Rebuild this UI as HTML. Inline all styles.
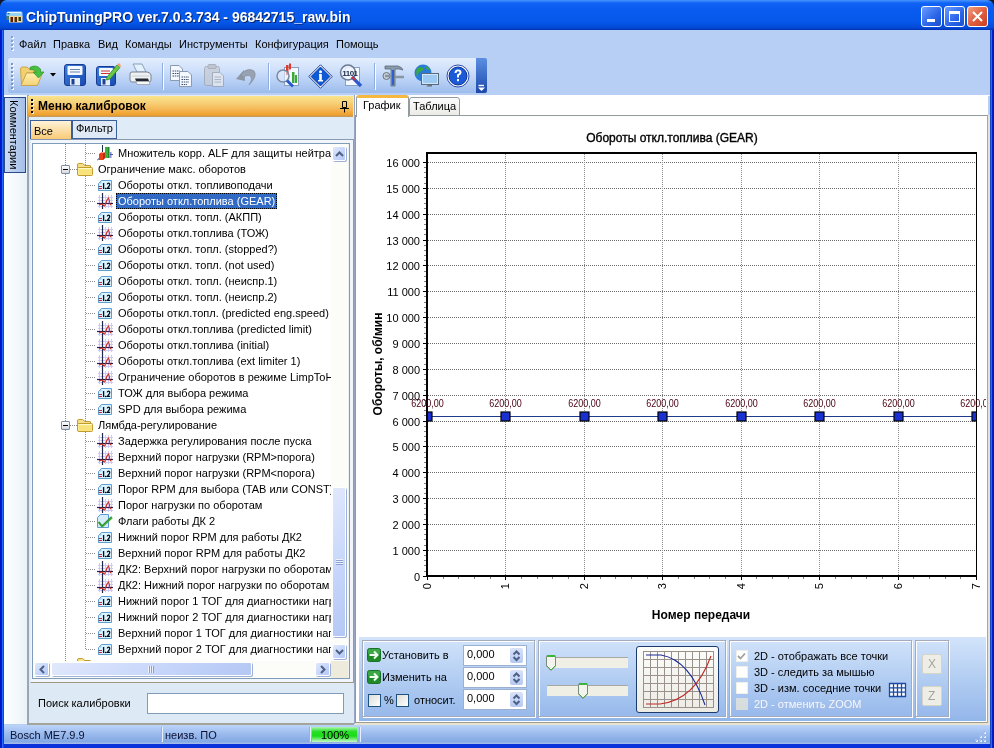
<!DOCTYPE html><html><head><meta charset="utf-8"><style>
*{margin:0;padding:0;box-sizing:border-box}
html,body{width:994px;height:748px;overflow:hidden;background:#0831d9;}
body{will-change:transform;font-family:"Liberation Sans", sans-serif;font-size:11px;color:#000}
.abs{position:absolute}
.ic{position:absolute}
.tt{position:absolute;white-space:nowrap;height:16px;line-height:16px;padding:0 2px;font-size:11px}
.sel{background:#316ac5;color:#fff;outline:1px dotted #000;outline-offset:-1px}
.vdot{position:absolute;width:1px;background-image:linear-gradient(#8c8c8c 50%,transparent 50%);background-size:1px 2px}
.hdot{position:absolute;height:1px;background-image:linear-gradient(90deg,#8c8c8c 50%,transparent 50%);background-size:2px 1px}
.minus{position:absolute;width:9px;height:9px;border:1px solid #7a8ea8;border-radius:1px;background:linear-gradient(#fff,#d4d8de)}
.minus:after{content:"";position:absolute;left:1px;top:3px;width:5px;height:1px;background:#000}
.mi{position:absolute;top:38px;font-size:11px;white-space:nowrap}
</style></head><body><div class="abs" style="left:0;top:0;width:6px;height:6px;background:#101830"></div><div class="abs" style="left:988px;top:0;width:6px;height:6px;background:#101830"></div><div class="abs" style="left:0;top:0;width:994px;height:30px;background:linear-gradient(#4a94ff 0px,#1064f4 3px,#0a5cf0 8px,#0658ea 22px,#0348d4 28px,#0030b0 30px);border-radius:7px 7px 0 0"></div><svg class="abs" style="left:6px;top:11px" width="17" height="12" viewBox="0 0 17 12"><path d="M0.5 2 Q0.5 0.5 2 0.5 H15 Q16.5 0.5 16.5 2 V5.5 H0.5 Z" fill="#9ad4f4"/><path d="M1 1.5 H15" stroke="#e8f8ff"/><rect x="1.5" y="2" width="2" height="1.5" fill="#3a6a8a"/><path d="M0.5 5 V9 H3 V5 Z" fill="#4a7a6a"/><rect x="3" y="5" width="13.5" height="6.5" fill="#f0d898"/><rect x="4.5" y="6" width="2.5" height="5" fill="#5a1a08"/><rect x="8.5" y="6" width="2.5" height="5" fill="#5a2a08"/><rect x="12.5" y="6" width="2.5" height="4" fill="#3a3a10"/></svg><div class="abs" style="left:26px;top:9px;font-weight:bold;font-size:14px;color:#fff;white-space:nowrap;text-shadow:1px 1px #0a246a">ChipTuningPRO ver.7.0.3.734 - 96842715_raw.bin</div><div class="abs" style="left:921px;top:6px;width:21px;height:21px;border:1px solid #fff;border-radius:3px;background:linear-gradient(135deg,#6a9cff,#2a64e8 60%,#1a50d0)"><div class="abs" style="left:5px;top:12px;width:8px;height:3px;background:#fff"></div></div><div class="abs" style="left:944px;top:6px;width:21px;height:21px;border:1px solid #fff;border-radius:3px;background:linear-gradient(135deg,#6a9cff,#2a64e8 60%,#1a50d0)"><div class="abs" style="left:4px;top:4px;width:11px;height:11px;border:1px solid #fff;border-top-width:3px"></div></div><div class="abs" style="left:967px;top:6px;width:21px;height:21px;border:1px solid #fff;border-radius:3px;background:linear-gradient(135deg,#f0a080,#e06040 50%,#c84020)"><svg class="abs" style="left:4px;top:4px" width="11" height="11"><path d="M1 1 L10 10 M10 1 L1 10" stroke="#fff" stroke-width="2"/></svg></div><div class="abs" style="left:4px;top:30px;width:986px;height:713px;background:#b8cff5"></div><div class="mi" style="left:19px">Файл</div><div class="mi" style="left:53px">Правка</div><div class="mi" style="left:98px">Вид</div><div class="mi" style="left:125px">Команды</div><div class="mi" style="left:179px">Инструменты</div><div class="mi" style="left:255px">Конфигурация</div><div class="mi" style="left:336px">Помощь</div><div class="abs" style="left:8px;top:58px;width:469px;height:35px;border-radius:3px 0 0 3px;background:linear-gradient(#e3eefd,#d2e2fb 30%,#b8d0f5 65%,#9cbcec)"></div><div class="abs" style="left:4px;top:95px;width:986px;height:1px;background:#f4f8fe"></div><div class="abs" style="left:476px;top:58px;width:11px;height:35px;border-radius:0 2px 2px 0;background:linear-gradient(#5c8ee0,#3a6cc8 50%,#1e48a8)"></div><svg class="abs" style="left:477px;top:84px" width="9" height="8"><path d="M1.5 1.5 H7" stroke="#fff" stroke-width="1.4"/><path d="M1 3.5 H8 L4.5 7 Z" fill="#fff"/></svg><div class="abs" style="left:11px;top:63px;width:2px;height:2px;background:#7c92c0"></div><div class="abs" style="left:12px;top:64px;width:2px;height:2px;background:#fff;z-index:0"></div><div class="abs" style="left:11px;top:63px;width:2px;height:2px;background:#7c92c0"></div><div class="abs" style="left:11px;top:67px;width:2px;height:2px;background:#7c92c0"></div><div class="abs" style="left:12px;top:68px;width:2px;height:2px;background:#fff;z-index:0"></div><div class="abs" style="left:11px;top:67px;width:2px;height:2px;background:#7c92c0"></div><div class="abs" style="left:11px;top:71px;width:2px;height:2px;background:#7c92c0"></div><div class="abs" style="left:12px;top:72px;width:2px;height:2px;background:#fff;z-index:0"></div><div class="abs" style="left:11px;top:71px;width:2px;height:2px;background:#7c92c0"></div><div class="abs" style="left:11px;top:75px;width:2px;height:2px;background:#7c92c0"></div><div class="abs" style="left:12px;top:76px;width:2px;height:2px;background:#fff;z-index:0"></div><div class="abs" style="left:11px;top:75px;width:2px;height:2px;background:#7c92c0"></div><div class="abs" style="left:11px;top:79px;width:2px;height:2px;background:#7c92c0"></div><div class="abs" style="left:12px;top:80px;width:2px;height:2px;background:#fff;z-index:0"></div><div class="abs" style="left:11px;top:79px;width:2px;height:2px;background:#7c92c0"></div><div class="abs" style="left:11px;top:83px;width:2px;height:2px;background:#7c92c0"></div><div class="abs" style="left:12px;top:84px;width:2px;height:2px;background:#fff;z-index:0"></div><div class="abs" style="left:11px;top:83px;width:2px;height:2px;background:#7c92c0"></div><div class="abs" style="left:11px;top:87px;width:2px;height:2px;background:#7c92c0"></div><div class="abs" style="left:12px;top:88px;width:2px;height:2px;background:#fff;z-index:0"></div><div class="abs" style="left:11px;top:87px;width:2px;height:2px;background:#7c92c0"></div><div class="abs" style="left:12px;top:37px;width:2px;height:2px;background:#fff"></div><div class="abs" style="left:11px;top:36px;width:2px;height:2px;background:#8aa0cc"></div><div class="abs" style="left:12px;top:41px;width:2px;height:2px;background:#fff"></div><div class="abs" style="left:11px;top:40px;width:2px;height:2px;background:#8aa0cc"></div><div class="abs" style="left:12px;top:45px;width:2px;height:2px;background:#fff"></div><div class="abs" style="left:11px;top:44px;width:2px;height:2px;background:#8aa0cc"></div><div class="abs" style="left:12px;top:49px;width:2px;height:2px;background:#fff"></div><div class="abs" style="left:11px;top:48px;width:2px;height:2px;background:#8aa0cc"></div><div class="abs" style="left:162px;top:63px;width:1px;height:26px;background:#8eaee0"></div><div class="abs" style="left:163px;top:64px;width:1px;height:26px;background:#fff"></div><div class="abs" style="left:268px;top:63px;width:1px;height:26px;background:#8eaee0"></div><div class="abs" style="left:269px;top:64px;width:1px;height:26px;background:#fff"></div><div class="abs" style="left:374px;top:63px;width:1px;height:26px;background:#8eaee0"></div><div class="abs" style="left:375px;top:64px;width:1px;height:26px;background:#fff"></div><svg class="abs" style="left:19px;top:63px" width="27" height="25" viewBox="0 0 27 25">
<defs><linearGradient id="fy" x1="0" y1="0" x2="0" y2="1"><stop offset="0" stop-color="#fff0b0"/><stop offset="1" stop-color="#f2d27a"/></linearGradient></defs>
<path d="M1.5 6 Q1.5 4 3.5 4 H8 L10 6 H16 V10 H8 L2.5 22 Z" fill="#f0d070" stroke="#c8a040" stroke-width="0.9"/>
<path d="M2 22.5 L7.5 10 H23.5 L18.5 22.5 Z" fill="url(#fy)" stroke="#c8a040" stroke-width="0.9"/>
<path d="M11 4.5 Q17 1 21.5 6 L21.5 9 L25 9 L19.5 15 L14 9 L17.5 9 Q15.5 6 11 6.5 Z" fill="#48c040" stroke="#2a9028" stroke-width="0.7"/>
</svg><svg class="abs" style="left:50px;top:73px" width="7" height="4"><path d="M0 0 H6 L3 3.5 Z" fill="#000"/></svg><svg class="abs" style="left:64px;top:64px" width="23" height="23" viewBox="0 0 23 23">
<defs><linearGradient id="sb" x1="0" y1="0" x2="1" y2="1"><stop offset="0" stop-color="#3a80e0"/><stop offset="1" stop-color="#1a4ab0"/></linearGradient></defs>
<rect x="0.5" y="0.5" width="21" height="21" rx="2.5" fill="url(#sb)" stroke="#1a3c90"/>
<rect x="3.5" y="2" width="15" height="9" rx="1" fill="#f4f8ff"/>
<path d="M6 5.5 H16 M6 8 H16" stroke="#6a86b0"/>
<rect x="6" y="14" width="10" height="7.5" fill="#e4ecf8"/><rect x="7.5" y="15" width="3" height="5.5" fill="#1f3f90"/>
</svg><svg class="abs" style="left:96px;top:62px" width="25" height="25" viewBox="0 0 25 25">
<rect x="0.5" y="4.5" width="19" height="19" rx="2.5" fill="url(#sb)" stroke="#1a3c90"/>
<rect x="3" y="6" width="14" height="8" rx="1" fill="#f4f8ff"/>
<path d="M5 9 H14 M5 11.5 H14" stroke="#d03030"/>
<rect x="5" y="16" width="9" height="7.5" fill="#e4ecf8"/><rect x="6.5" y="17" width="3" height="5.5" fill="#1f3f90"/>
<path d="M11 15 L21 3 L24 5.5 L14 17 L10.5 18 Z" fill="#6cc848" stroke="#2f8a20" stroke-width="0.8"/>
<path d="M21 3 L23 1 L25 3.5 L24 5.5" fill="#f0a070"/>
</svg><svg class="abs" style="left:128px;top:63px" width="25" height="24" viewBox="0 0 25 24">
<path d="M5 1 H14 L18 9 H9 Z" fill="#e4f2ff" stroke="#8aa0b8"/>
<path d="M2 11 Q2 9 4 9 H19 Q22 9 23 12 V17 Q23 19 21 19 H4 Q2 19 2 17 Z" fill="#eef0f2" stroke="#7a8490"/>
<path d="M4 13 H21" stroke="#c8d0d8"/>
<path d="M7 15.5 H20 L21 18 H8 Z" fill="#202830"/>
<path d="M8 18.5 H21 L22 21.5 H9 Z" fill="#f8f8f8" stroke="#9aa0a8" stroke-width="0.8"/>
</svg><svg class="abs" style="left:170px;top:65px" width="23" height="22" viewBox="0 0 23 22">
<path d="M0.5 0.5 H9 L12.5 4 V15.5 H0.5 Z" fill="#f4f8ff" stroke="#8a9ab0"/>
<path d="M2.5 6 H10 M2.5 8.5 H10 M2.5 11 H10" stroke="#3a4a6a" stroke-dasharray="1.5 0.8"/>
<path d="M9.5 6.5 H18 L21.5 10 V21.5 H9.5 Z" fill="#f4f8ff" stroke="#8a9ab0"/>
<path d="M11.5 12 H19 M11.5 14.5 H19 M11.5 17 H19 M11.5 19.5 H17" stroke="#3a4a6a" stroke-dasharray="1.5 0.8"/>
</svg><svg class="abs" style="left:204px;top:64px" width="21" height="23" viewBox="0 0 21 23" opacity="0.75">
<rect x="0.5" y="2.5" width="15" height="19" rx="2" fill="#c8ccd4" stroke="#9aa0aa"/>
<rect x="4" y="0.5" width="8" height="4" rx="1" fill="#b8bcc4" stroke="#9aa0aa"/>
<path d="M8.5 8.5 H16 L19.5 12 V22.5 H8.5 Z" fill="#e8eaee" stroke="#9aa0aa"/>
<path d="M10.5 13 H17 M10.5 15.5 H17 M10.5 18 H17" stroke="#a8acb4"/>
</svg><svg class="abs" style="left:235px;top:65px" width="22" height="21" viewBox="0 0 22 21">
<path d="M1 14 L9 5 L10 16 Z" fill="#8c96a4"/>
<path d="M6 9 Q13 2 19 6 Q23 11 14 20 Q19 12 14 10.5 Q10 10 8 13 Z" fill="#98a2b0" stroke="#7e8896" stroke-width="0.6"/>
</svg><svg class="abs" style="left:275px;top:63px" width="25" height="25" viewBox="0 0 25 25">
<rect x="9.5" y="4.5" width="14" height="18" fill="#f4f8ff" stroke="#8aa0c0"/>
<rect x="17" y="9" width="2.5" height="11" fill="#3aaa34"/><rect x="20" y="12" width="2" height="8" fill="#3aaa34"/>
<rect x="11" y="2" width="2.5" height="10" fill="#e03a2a"/><rect x="14" y="0.5" width="2" height="6" fill="#e03a2a"/>
<circle cx="8" cy="13" r="6" fill="rgba(230,240,255,0.6)" stroke="#7a8aa0" stroke-width="1.5"/>
<path d="M12 17.5 L18 23.5" stroke="#2a5ad0" stroke-width="3"/>
</svg><svg class="abs" style="left:308px;top:64px" width="25" height="25" viewBox="0 0 25 25">
<path d="M12.5 0.8 L24.2 12.5 L12.5 24.2 L0.8 12.5 Z" fill="#fff" stroke="#0a3aa0" stroke-width="1"/>
<path d="M12.5 3 L22 12.5 L12.5 22 L3 12.5 Z" fill="#0c5ad8" stroke="#0a2a80" stroke-width="0.8"/>
<circle cx="12.5" cy="7.8" r="1.5" fill="#fff"/><path d="M11 10 H13.8 V16 H15 V17.5 H10 V16 H11.2 V11.5 H11 Z" fill="#fff"/>
</svg><svg class="abs" style="left:339px;top:64px" width="26" height="24" viewBox="0 0 26 24">
<rect x="6.5" y="3.5" width="14" height="18" fill="#f4f8ff" stroke="#8aa0c0"/>
<circle cx="9" cy="8.5" r="7.5" fill="rgba(240,245,255,.85)" stroke="#6a7a90" stroke-width="1.5"/>
<text x="3.2" y="12" font-family="Liberation Sans" font-size="8" font-weight="bold" fill="#203050" letter-spacing="-0.5">1101</text>
<path d="M13 13 L22 22" stroke="#2a5ad0" stroke-width="3.2"/>
<path d="M13 13 L16 16" stroke="#d03030" stroke-width="2"/>
</svg><svg class="abs" style="left:382px;top:64px" width="24" height="24" viewBox="0 0 24 24">
<path d="M3 2 H16 Q20 3 21 6 L17 5 H13 V22 H9 V5 H3 Z" fill="#8a9aaa" stroke="#5a6a7a" stroke-width="0.8"/>
<path d="M10 6 H12 V21 H10 Z" fill="#2a60d0"/>
<circle cx="4.5" cy="12" r="3.5" fill="#c8d0d8" stroke="#6a7480"/>
<path d="M3 12 H9 M13 13 H22" stroke="#8a96a2" stroke-width="2.5"/>
</svg><svg class="abs" style="left:414px;top:64px" width="26" height="24" viewBox="0 0 26 24">
<circle cx="9" cy="9" r="8.5" fill="#2a7ad8"/>
<path d="M3 4 Q8 2 10 5 Q8 8 5 8 Q3 11 4 14 Q1 10 3 4 Z M11 2 Q15 3 16 6 Q12 6 11 2 Z" fill="#3aa83a"/>
<rect x="7.5" y="9.5" width="17" height="11" fill="#cfe6fb" stroke="#5a6a7a"/>
<rect x="9" y="11" width="14" height="8" fill="#9ccaf2"/>
<path d="M14 21 H18 V22.5 H12 Z" fill="#6a7480"/>
</svg><svg class="abs" style="left:446px;top:64px" width="24" height="24" viewBox="0 0 24 24">
<circle cx="12" cy="12" r="11" fill="#fff" stroke="#2a4ab0"/>
<circle cx="12" cy="12" r="9" fill="#1a5ad8" stroke="#0a3090"/>
<path d="M8.5 9 Q8.5 5.5 12 5.5 Q15.5 5.5 15.5 8.5 Q15.5 10.5 13 11.5 V13.5 H11 V10.5 Q13.5 9.5 13.5 8.5 Q13.5 7.3 12 7.3 Q10.5 7.3 10.5 9 Z" fill="#fff"/>
<rect x="11" y="15" width="2" height="2.2" fill="#fff"/>
</svg><div class="abs" style="left:4px;top:95px;width:23px;height:629px;background:linear-gradient(90deg,#ffffff,#eaf3f8)"></div><div class="abs" style="left:0;top:30px;width:4px;height:718px;background:linear-gradient(90deg,#0014c0 0,#0020d0 2px,#2468ff 2px,#2468ff 3px,#1848c0 3px)"></div><div class="abs" style="left:990px;top:30px;width:4px;height:718px;background:linear-gradient(90deg,#1848c0 0,#1848c0 1px,#2468ff 1px,#2468ff 2px,#0020d0 2px,#0014c0)"></div><div class="abs" style="left:4px;top:97px;width:22px;height:76px;border:1px solid #2a4a88;background:linear-gradient(90deg,#cddcf4,#a4bfe8)"></div><div class="abs" style="left:20px;top:100px;transform-origin:0 0;transform:rotate(90deg);white-space:nowrap;font-size:11px">Комментарии</div><div class="abs" style="left:27px;top:95px;width:328px;height:630px;background:#dfebf6;border-left:2px solid #9aa6b6"></div><div class="abs" style="left:28px;top:96px;width:325px;height:21px;background:linear-gradient(#f9e48c,#f7d27a 30%,#f4b654 65%,#f0a02a 90%,#c89a58 96%)"></div><div class="abs" style="left:31px;top:99px;width:2px;height:2px;background:#000;box-shadow:1px 1px 0 #fff8e0"></div><div class="abs" style="left:31px;top:103px;width:2px;height:2px;background:#000;box-shadow:1px 1px 0 #fff8e0"></div><div class="abs" style="left:31px;top:107px;width:2px;height:2px;background:#000;box-shadow:1px 1px 0 #fff8e0"></div><div class="abs" style="left:31px;top:111px;width:2px;height:2px;background:#000;box-shadow:1px 1px 0 #fff8e0"></div><div class="abs" style="left:38px;top:99px;font-weight:bold;font-size:12px;white-space:nowrap">Меню калибровок</div><svg class="abs" style="left:339px;top:100px" width="11" height="13"><path d="M3.5 1.5 H7.5 V7.5 H3.5 Z M1 8.5 H10 M5.5 8.5 V12.5" stroke="#000" fill="none"/></svg><div class="abs" style="left:30px;top:120px;width:42px;height:20px;border:1px solid #3b5f9a;border-bottom:none;background:linear-gradient(#fff3d8,#f8c872)"></div><div class="abs" style="left:34px;top:125px;font-size:11px">Все</div><div class="abs" style="left:72px;top:120px;width:45px;height:19px;border:1px solid #3b5f9a;background:#dfeaf6"></div><div class="abs" style="left:76px;top:122px;font-size:11px">Фильтр</div><div class="abs" style="left:30px;top:139px;width:324px;height:544px;border:1px solid #8a9ab0;background:#f0f6fc;border-bottom-color:#a09880;border-left-color:#e4ecf4"></div><div class="abs" style="left:32px;top:143px;width:318px;height:536px;border:1px solid #7f9db9;background:#fff"></div><div class="abs" style="left:348px;top:144px;width:1px;height:534px;background:#f0f0ee"></div><div class="abs" style="left:354px;top:95px;width:1px;height:629px;background:#9aa4c4"></div><div class="abs" style="left:33px;top:144px;width:298px;height:517px;overflow:hidden"><div class="vdot" style="left:32px;top:0;height:517px"></div><div class="vdot" style="left:52px;top:0;height:26px"></div><div class="vdot" style="left:52px;top:32px;height:249px"></div><div class="vdot" style="left:52px;top:288px;height:218px"></div><div class="hdot" style="left:53px;top:9px;width:10px"></div><svg class="ic" style="left:64px;top:1px" width="17" height="16" viewBox="0 0 17 16">
<path d="M5.5 0 V7" stroke="#1d2d55"/>
<path d="M0 15.5 L2.5 13" stroke="#1d2d55"/>
<path d="M2 9 L4 7.5 H8 V13 L6 15 H2 Z" fill="#e8401c"/>
<path d="M8 7.5 V13 L6 15 V9 Z" fill="#b82c10"/>
<rect x="8" y="2" width="4" height="11" fill="#3cb43c"/><rect x="11" y="2" width="1.5" height="11" fill="#1e8a2a"/>
<rect x="12.5" y="7" width="2" height="6" fill="#8c8ce0"/>
<path d="M13 9.5 H16" stroke="#4a5aa8"/>
</svg><div class="tt" style="left:83px;top:1px">Множитель корр. ALF для защиты нейтра</div><div class="hdot" style="left:37px;top:25px;width:7px"></div><div class="minus" style="left:28px;top:21px"></div><svg class="ic" style="left:44px;top:19px" width="16" height="13" viewBox="0 0 16 13">
<path d="M0.5 11.5 V2 Q0.5 0.5 2 0.5 H5.5 Q6.5 0.5 7 2 L7.5 2.5 H13 Q13.5 2.5 13.5 3 V4.5" fill="#f6e08a" stroke="#bf9c2c"/>
<path d="M1.5 4.5 H14.5 Q15.5 4.5 15.5 5.5 V11.5 Q15.5 12.5 14.5 12.5 H2 Q0.5 12.5 0.5 11.5 V5.5 Q0.5 4.5 1.5 4.5 Z" fill="#fbe98e" stroke="#bf9c2c"/>
<path d="M2 5.5 H14.5" stroke="#fff8c8"/>
<rect x="2" y="6.5" width="12.5" height="5" fill="#f8e27a"/>
</svg><div class="tt" style="left:63px;top:17px">Ограничение макс. оборотов</div><div class="hdot" style="left:53px;top:41px;width:10px"></div><svg class="ic" style="left:65px;top:36px" width="14" height="11" viewBox="0 0 14 11">
<path d="M3.5 0.5 H13.5 V10.5 H0.5 V3.5 Z" fill="#dcf4fe" stroke="#5aa0d8"/>
<path d="M1 3.5 L3.5 1 V3.5 Z" fill="#9cc8ee"/>
<path d="M0.8 6.5 H4 M0.8 8.5 H4" stroke="#c8283a" stroke-width="1.1"/>
<path d="M5.6 3 V9" stroke="#050a20" stroke-width="1.3"/>
<rect x="6.9" y="7.8" width="1.3" height="1.3" fill="#050a20"/>
<path d="M9.2 4.4 Q9.5 3.2 10.6 3.2 Q11.8 3.2 11.8 4.5 Q11.8 5.5 9.3 8.4 H12.1" stroke="#050a20" stroke-width="1.25" fill="none"/>
</svg><div class="tt" style="left:83px;top:33px">Обороты откл. топливоподачи</div><div class="hdot" style="left:53px;top:57px;width:10px"></div><svg class="ic" style="left:64px;top:49px" width="16" height="16" viewBox="0 0 16 16">
<g stroke="#cfc8f4" stroke-width="1">
<path d="M1 4.5 H16 M1 7.5 H16 M1 13.5 H16 M2.5 2 V15 M8.5 2 V15 M11.5 2 V15 M14.5 2 V15"/></g>
<path d="M0 10.5 H16" stroke="#2a1a5a" stroke-width="1.2"/>
<path d="M5.5 0 V16" stroke="#1d2a50" stroke-width="1.2"/>
<path d="M2 12 Q4 11 5.5 11 Q6.5 13 7.5 13 Q9 11 10 7 L11.5 5 Q12.5 7 13 11 L14 12" fill="none" stroke="#c8301e" stroke-width="1.1"/>
</svg><div class="tt sel" style="left:83px;top:49px">Обороты откл.топлива (GEAR)</div><div class="hdot" style="left:53px;top:73px;width:10px"></div><svg class="ic" style="left:65px;top:68px" width="14" height="11" viewBox="0 0 14 11">
<path d="M3.5 0.5 H13.5 V10.5 H0.5 V3.5 Z" fill="#dcf4fe" stroke="#5aa0d8"/>
<path d="M1 3.5 L3.5 1 V3.5 Z" fill="#9cc8ee"/>
<path d="M0.8 6.5 H4 M0.8 8.5 H4" stroke="#c8283a" stroke-width="1.1"/>
<path d="M5.6 3 V9" stroke="#050a20" stroke-width="1.3"/>
<rect x="6.9" y="7.8" width="1.3" height="1.3" fill="#050a20"/>
<path d="M9.2 4.4 Q9.5 3.2 10.6 3.2 Q11.8 3.2 11.8 4.5 Q11.8 5.5 9.3 8.4 H12.1" stroke="#050a20" stroke-width="1.25" fill="none"/>
</svg><div class="tt" style="left:83px;top:65px">Обороты откл. топл. (АКПП)</div><div class="hdot" style="left:53px;top:89px;width:10px"></div><svg class="ic" style="left:64px;top:81px" width="16" height="16" viewBox="0 0 16 16">
<g stroke="#cfc8f4" stroke-width="1">
<path d="M1 4.5 H16 M1 7.5 H16 M1 13.5 H16 M2.5 2 V15 M8.5 2 V15 M11.5 2 V15 M14.5 2 V15"/></g>
<path d="M0 10.5 H16" stroke="#2a1a5a" stroke-width="1.2"/>
<path d="M5.5 0 V16" stroke="#1d2a50" stroke-width="1.2"/>
<path d="M2 12 Q4 11 5.5 11 Q6.5 13 7.5 13 Q9 11 10 7 L11.5 5 Q12.5 7 13 11 L14 12" fill="none" stroke="#c8301e" stroke-width="1.1"/>
</svg><div class="tt" style="left:83px;top:81px">Обороты откл.топлива (ТОЖ)</div><div class="hdot" style="left:53px;top:105px;width:10px"></div><svg class="ic" style="left:65px;top:100px" width="14" height="11" viewBox="0 0 14 11">
<path d="M3.5 0.5 H13.5 V10.5 H0.5 V3.5 Z" fill="#dcf4fe" stroke="#5aa0d8"/>
<path d="M1 3.5 L3.5 1 V3.5 Z" fill="#9cc8ee"/>
<path d="M0.8 6.5 H4 M0.8 8.5 H4" stroke="#c8283a" stroke-width="1.1"/>
<path d="M5.6 3 V9" stroke="#050a20" stroke-width="1.3"/>
<rect x="6.9" y="7.8" width="1.3" height="1.3" fill="#050a20"/>
<path d="M9.2 4.4 Q9.5 3.2 10.6 3.2 Q11.8 3.2 11.8 4.5 Q11.8 5.5 9.3 8.4 H12.1" stroke="#050a20" stroke-width="1.25" fill="none"/>
</svg><div class="tt" style="left:83px;top:97px">Обороты откл. топл. (stopped?)</div><div class="hdot" style="left:53px;top:121px;width:10px"></div><svg class="ic" style="left:65px;top:116px" width="14" height="11" viewBox="0 0 14 11">
<path d="M3.5 0.5 H13.5 V10.5 H0.5 V3.5 Z" fill="#dcf4fe" stroke="#5aa0d8"/>
<path d="M1 3.5 L3.5 1 V3.5 Z" fill="#9cc8ee"/>
<path d="M0.8 6.5 H4 M0.8 8.5 H4" stroke="#c8283a" stroke-width="1.1"/>
<path d="M5.6 3 V9" stroke="#050a20" stroke-width="1.3"/>
<rect x="6.9" y="7.8" width="1.3" height="1.3" fill="#050a20"/>
<path d="M9.2 4.4 Q9.5 3.2 10.6 3.2 Q11.8 3.2 11.8 4.5 Q11.8 5.5 9.3 8.4 H12.1" stroke="#050a20" stroke-width="1.25" fill="none"/>
</svg><div class="tt" style="left:83px;top:113px">Обороты откл. топл. (not used)</div><div class="hdot" style="left:53px;top:137px;width:10px"></div><svg class="ic" style="left:65px;top:132px" width="14" height="11" viewBox="0 0 14 11">
<path d="M3.5 0.5 H13.5 V10.5 H0.5 V3.5 Z" fill="#dcf4fe" stroke="#5aa0d8"/>
<path d="M1 3.5 L3.5 1 V3.5 Z" fill="#9cc8ee"/>
<path d="M0.8 6.5 H4 M0.8 8.5 H4" stroke="#c8283a" stroke-width="1.1"/>
<path d="M5.6 3 V9" stroke="#050a20" stroke-width="1.3"/>
<rect x="6.9" y="7.8" width="1.3" height="1.3" fill="#050a20"/>
<path d="M9.2 4.4 Q9.5 3.2 10.6 3.2 Q11.8 3.2 11.8 4.5 Q11.8 5.5 9.3 8.4 H12.1" stroke="#050a20" stroke-width="1.25" fill="none"/>
</svg><div class="tt" style="left:83px;top:129px">Обороты откл. топл. (неиспр.1)</div><div class="hdot" style="left:53px;top:153px;width:10px"></div><svg class="ic" style="left:65px;top:148px" width="14" height="11" viewBox="0 0 14 11">
<path d="M3.5 0.5 H13.5 V10.5 H0.5 V3.5 Z" fill="#dcf4fe" stroke="#5aa0d8"/>
<path d="M1 3.5 L3.5 1 V3.5 Z" fill="#9cc8ee"/>
<path d="M0.8 6.5 H4 M0.8 8.5 H4" stroke="#c8283a" stroke-width="1.1"/>
<path d="M5.6 3 V9" stroke="#050a20" stroke-width="1.3"/>
<rect x="6.9" y="7.8" width="1.3" height="1.3" fill="#050a20"/>
<path d="M9.2 4.4 Q9.5 3.2 10.6 3.2 Q11.8 3.2 11.8 4.5 Q11.8 5.5 9.3 8.4 H12.1" stroke="#050a20" stroke-width="1.25" fill="none"/>
</svg><div class="tt" style="left:83px;top:145px">Обороты откл. топл. (неиспр.2)</div><div class="hdot" style="left:53px;top:169px;width:10px"></div><svg class="ic" style="left:65px;top:164px" width="14" height="11" viewBox="0 0 14 11">
<path d="M3.5 0.5 H13.5 V10.5 H0.5 V3.5 Z" fill="#dcf4fe" stroke="#5aa0d8"/>
<path d="M1 3.5 L3.5 1 V3.5 Z" fill="#9cc8ee"/>
<path d="M0.8 6.5 H4 M0.8 8.5 H4" stroke="#c8283a" stroke-width="1.1"/>
<path d="M5.6 3 V9" stroke="#050a20" stroke-width="1.3"/>
<rect x="6.9" y="7.8" width="1.3" height="1.3" fill="#050a20"/>
<path d="M9.2 4.4 Q9.5 3.2 10.6 3.2 Q11.8 3.2 11.8 4.5 Q11.8 5.5 9.3 8.4 H12.1" stroke="#050a20" stroke-width="1.25" fill="none"/>
</svg><div class="tt" style="left:83px;top:161px">Обороты откл.топл. (predicted eng.speed)</div><div class="hdot" style="left:53px;top:185px;width:10px"></div><svg class="ic" style="left:64px;top:177px" width="16" height="16" viewBox="0 0 16 16">
<g stroke="#cfc8f4" stroke-width="1">
<path d="M1 4.5 H16 M1 7.5 H16 M1 13.5 H16 M2.5 2 V15 M8.5 2 V15 M11.5 2 V15 M14.5 2 V15"/></g>
<path d="M0 10.5 H16" stroke="#2a1a5a" stroke-width="1.2"/>
<path d="M5.5 0 V16" stroke="#1d2a50" stroke-width="1.2"/>
<path d="M2 12 Q4 11 5.5 11 Q6.5 13 7.5 13 Q9 11 10 7 L11.5 5 Q12.5 7 13 11 L14 12" fill="none" stroke="#c8301e" stroke-width="1.1"/>
</svg><div class="tt" style="left:83px;top:177px">Обороты откл.топлива (predicted limit)</div><div class="hdot" style="left:53px;top:201px;width:10px"></div><svg class="ic" style="left:64px;top:193px" width="16" height="16" viewBox="0 0 16 16">
<g stroke="#cfc8f4" stroke-width="1">
<path d="M1 4.5 H16 M1 7.5 H16 M1 13.5 H16 M2.5 2 V15 M8.5 2 V15 M11.5 2 V15 M14.5 2 V15"/></g>
<path d="M0 10.5 H16" stroke="#2a1a5a" stroke-width="1.2"/>
<path d="M5.5 0 V16" stroke="#1d2a50" stroke-width="1.2"/>
<path d="M2 12 Q4 11 5.5 11 Q6.5 13 7.5 13 Q9 11 10 7 L11.5 5 Q12.5 7 13 11 L14 12" fill="none" stroke="#c8301e" stroke-width="1.1"/>
</svg><div class="tt" style="left:83px;top:193px">Обороты откл.топлива (initial)</div><div class="hdot" style="left:53px;top:217px;width:10px"></div><svg class="ic" style="left:64px;top:209px" width="16" height="16" viewBox="0 0 16 16">
<g stroke="#cfc8f4" stroke-width="1">
<path d="M1 4.5 H16 M1 7.5 H16 M1 13.5 H16 M2.5 2 V15 M8.5 2 V15 M11.5 2 V15 M14.5 2 V15"/></g>
<path d="M0 10.5 H16" stroke="#2a1a5a" stroke-width="1.2"/>
<path d="M5.5 0 V16" stroke="#1d2a50" stroke-width="1.2"/>
<path d="M2 12 Q4 11 5.5 11 Q6.5 13 7.5 13 Q9 11 10 7 L11.5 5 Q12.5 7 13 11 L14 12" fill="none" stroke="#c8301e" stroke-width="1.1"/>
</svg><div class="tt" style="left:83px;top:209px">Обороты откл.топлива (ext limiter 1)</div><div class="hdot" style="left:53px;top:233px;width:10px"></div><svg class="ic" style="left:64px;top:225px" width="16" height="16" viewBox="0 0 16 16">
<g stroke="#cfc8f4" stroke-width="1">
<path d="M1 4.5 H16 M1 7.5 H16 M1 13.5 H16 M2.5 2 V15 M8.5 2 V15 M11.5 2 V15 M14.5 2 V15"/></g>
<path d="M0 10.5 H16" stroke="#2a1a5a" stroke-width="1.2"/>
<path d="M5.5 0 V16" stroke="#1d2a50" stroke-width="1.2"/>
<path d="M2 12 Q4 11 5.5 11 Q6.5 13 7.5 13 Q9 11 10 7 L11.5 5 Q12.5 7 13 11 L14 12" fill="none" stroke="#c8301e" stroke-width="1.1"/>
</svg><div class="tt" style="left:83px;top:225px">Ограничение оборотов в режиме LimpToH</div><div class="hdot" style="left:53px;top:249px;width:10px"></div><svg class="ic" style="left:65px;top:244px" width="14" height="11" viewBox="0 0 14 11">
<path d="M3.5 0.5 H13.5 V10.5 H0.5 V3.5 Z" fill="#dcf4fe" stroke="#5aa0d8"/>
<path d="M1 3.5 L3.5 1 V3.5 Z" fill="#9cc8ee"/>
<path d="M0.8 6.5 H4 M0.8 8.5 H4" stroke="#c8283a" stroke-width="1.1"/>
<path d="M5.6 3 V9" stroke="#050a20" stroke-width="1.3"/>
<rect x="6.9" y="7.8" width="1.3" height="1.3" fill="#050a20"/>
<path d="M9.2 4.4 Q9.5 3.2 10.6 3.2 Q11.8 3.2 11.8 4.5 Q11.8 5.5 9.3 8.4 H12.1" stroke="#050a20" stroke-width="1.25" fill="none"/>
</svg><div class="tt" style="left:83px;top:241px">ТОЖ для выбора режима</div><div class="hdot" style="left:53px;top:265px;width:10px"></div><svg class="ic" style="left:65px;top:260px" width="14" height="11" viewBox="0 0 14 11">
<path d="M3.5 0.5 H13.5 V10.5 H0.5 V3.5 Z" fill="#dcf4fe" stroke="#5aa0d8"/>
<path d="M1 3.5 L3.5 1 V3.5 Z" fill="#9cc8ee"/>
<path d="M0.8 6.5 H4 M0.8 8.5 H4" stroke="#c8283a" stroke-width="1.1"/>
<path d="M5.6 3 V9" stroke="#050a20" stroke-width="1.3"/>
<rect x="6.9" y="7.8" width="1.3" height="1.3" fill="#050a20"/>
<path d="M9.2 4.4 Q9.5 3.2 10.6 3.2 Q11.8 3.2 11.8 4.5 Q11.8 5.5 9.3 8.4 H12.1" stroke="#050a20" stroke-width="1.25" fill="none"/>
</svg><div class="tt" style="left:83px;top:257px">SPD для выбора режима</div><div class="hdot" style="left:37px;top:281px;width:7px"></div><div class="minus" style="left:28px;top:277px"></div><svg class="ic" style="left:44px;top:275px" width="16" height="13" viewBox="0 0 16 13">
<path d="M0.5 11.5 V2 Q0.5 0.5 2 0.5 H5.5 Q6.5 0.5 7 2 L7.5 2.5 H13 Q13.5 2.5 13.5 3 V4.5" fill="#f6e08a" stroke="#bf9c2c"/>
<path d="M1.5 4.5 H14.5 Q15.5 4.5 15.5 5.5 V11.5 Q15.5 12.5 14.5 12.5 H2 Q0.5 12.5 0.5 11.5 V5.5 Q0.5 4.5 1.5 4.5 Z" fill="#fbe98e" stroke="#bf9c2c"/>
<path d="M2 5.5 H14.5" stroke="#fff8c8"/>
<rect x="2" y="6.5" width="12.5" height="5" fill="#f8e27a"/>
</svg><div class="tt" style="left:63px;top:273px">Лямбда-регулирование</div><div class="hdot" style="left:53px;top:297px;width:10px"></div><svg class="ic" style="left:64px;top:289px" width="16" height="16" viewBox="0 0 16 16">
<g stroke="#cfc8f4" stroke-width="1">
<path d="M1 4.5 H16 M1 7.5 H16 M1 13.5 H16 M2.5 2 V15 M8.5 2 V15 M11.5 2 V15 M14.5 2 V15"/></g>
<path d="M0 10.5 H16" stroke="#2a1a5a" stroke-width="1.2"/>
<path d="M5.5 0 V16" stroke="#1d2a50" stroke-width="1.2"/>
<path d="M2 12 Q4 11 5.5 11 Q6.5 13 7.5 13 Q9 11 10 7 L11.5 5 Q12.5 7 13 11 L14 12" fill="none" stroke="#c8301e" stroke-width="1.1"/>
</svg><div class="tt" style="left:83px;top:289px">Задержка регулирования после пуска</div><div class="hdot" style="left:53px;top:313px;width:10px"></div><svg class="ic" style="left:64px;top:305px" width="16" height="16" viewBox="0 0 16 16">
<g stroke="#cfc8f4" stroke-width="1">
<path d="M1 4.5 H16 M1 7.5 H16 M1 13.5 H16 M2.5 2 V15 M8.5 2 V15 M11.5 2 V15 M14.5 2 V15"/></g>
<path d="M0 10.5 H16" stroke="#2a1a5a" stroke-width="1.2"/>
<path d="M5.5 0 V16" stroke="#1d2a50" stroke-width="1.2"/>
<path d="M2 12 Q4 11 5.5 11 Q6.5 13 7.5 13 Q9 11 10 7 L11.5 5 Q12.5 7 13 11 L14 12" fill="none" stroke="#c8301e" stroke-width="1.1"/>
</svg><div class="tt" style="left:83px;top:305px">Верхний порог нагрузки (RPM&gt;порога)</div><div class="hdot" style="left:53px;top:329px;width:10px"></div><svg class="ic" style="left:65px;top:324px" width="14" height="11" viewBox="0 0 14 11">
<path d="M3.5 0.5 H13.5 V10.5 H0.5 V3.5 Z" fill="#dcf4fe" stroke="#5aa0d8"/>
<path d="M1 3.5 L3.5 1 V3.5 Z" fill="#9cc8ee"/>
<path d="M0.8 6.5 H4 M0.8 8.5 H4" stroke="#c8283a" stroke-width="1.1"/>
<path d="M5.6 3 V9" stroke="#050a20" stroke-width="1.3"/>
<rect x="6.9" y="7.8" width="1.3" height="1.3" fill="#050a20"/>
<path d="M9.2 4.4 Q9.5 3.2 10.6 3.2 Q11.8 3.2 11.8 4.5 Q11.8 5.5 9.3 8.4 H12.1" stroke="#050a20" stroke-width="1.25" fill="none"/>
</svg><div class="tt" style="left:83px;top:321px">Верхний порог нагрузки (RPM&lt;порога)</div><div class="hdot" style="left:53px;top:345px;width:10px"></div><svg class="ic" style="left:65px;top:340px" width="14" height="11" viewBox="0 0 14 11">
<path d="M3.5 0.5 H13.5 V10.5 H0.5 V3.5 Z" fill="#dcf4fe" stroke="#5aa0d8"/>
<path d="M1 3.5 L3.5 1 V3.5 Z" fill="#9cc8ee"/>
<path d="M0.8 6.5 H4 M0.8 8.5 H4" stroke="#c8283a" stroke-width="1.1"/>
<path d="M5.6 3 V9" stroke="#050a20" stroke-width="1.3"/>
<rect x="6.9" y="7.8" width="1.3" height="1.3" fill="#050a20"/>
<path d="M9.2 4.4 Q9.5 3.2 10.6 3.2 Q11.8 3.2 11.8 4.5 Q11.8 5.5 9.3 8.4 H12.1" stroke="#050a20" stroke-width="1.25" fill="none"/>
</svg><div class="tt" style="left:83px;top:337px">Порог RPM для выбора (TAB или CONST)</div><div class="hdot" style="left:53px;top:361px;width:10px"></div><svg class="ic" style="left:64px;top:353px" width="16" height="16" viewBox="0 0 16 16">
<g stroke="#cfc8f4" stroke-width="1">
<path d="M1 4.5 H16 M1 7.5 H16 M1 13.5 H16 M2.5 2 V15 M8.5 2 V15 M11.5 2 V15 M14.5 2 V15"/></g>
<path d="M0 10.5 H16" stroke="#2a1a5a" stroke-width="1.2"/>
<path d="M5.5 0 V16" stroke="#1d2a50" stroke-width="1.2"/>
<path d="M2 12 Q4 11 5.5 11 Q6.5 13 7.5 13 Q9 11 10 7 L11.5 5 Q12.5 7 13 11 L14 12" fill="none" stroke="#c8301e" stroke-width="1.1"/>
</svg><div class="tt" style="left:83px;top:353px">Порог нагрузки по оборотам</div><div class="hdot" style="left:53px;top:377px;width:10px"></div><svg class="ic" style="left:64px;top:370px" width="16" height="15" viewBox="0 0 16 15">
<path d="M3.5 0.5 H11.5 V13.5 H0.5 V3.5 Z" fill="#d4ecfb" stroke="#5b9bd5"/>
<path d="M1.5 7.5 L5 12.5 L15 2.5 L15.5 4.5 L5 14 L1 9 Z" fill="#4bb03c"/>
<path d="M2 8 L5 12 L14.5 2.8" fill="none" stroke="#2e9428" stroke-width="1.3"/>
</svg><div class="tt" style="left:83px;top:369px">Флаги работы ДК 2</div><div class="hdot" style="left:53px;top:393px;width:10px"></div><svg class="ic" style="left:65px;top:388px" width="14" height="11" viewBox="0 0 14 11">
<path d="M3.5 0.5 H13.5 V10.5 H0.5 V3.5 Z" fill="#dcf4fe" stroke="#5aa0d8"/>
<path d="M1 3.5 L3.5 1 V3.5 Z" fill="#9cc8ee"/>
<path d="M0.8 6.5 H4 M0.8 8.5 H4" stroke="#c8283a" stroke-width="1.1"/>
<path d="M5.6 3 V9" stroke="#050a20" stroke-width="1.3"/>
<rect x="6.9" y="7.8" width="1.3" height="1.3" fill="#050a20"/>
<path d="M9.2 4.4 Q9.5 3.2 10.6 3.2 Q11.8 3.2 11.8 4.5 Q11.8 5.5 9.3 8.4 H12.1" stroke="#050a20" stroke-width="1.25" fill="none"/>
</svg><div class="tt" style="left:83px;top:385px">Нижний порог RPM для работы ДК2</div><div class="hdot" style="left:53px;top:409px;width:10px"></div><svg class="ic" style="left:65px;top:404px" width="14" height="11" viewBox="0 0 14 11">
<path d="M3.5 0.5 H13.5 V10.5 H0.5 V3.5 Z" fill="#dcf4fe" stroke="#5aa0d8"/>
<path d="M1 3.5 L3.5 1 V3.5 Z" fill="#9cc8ee"/>
<path d="M0.8 6.5 H4 M0.8 8.5 H4" stroke="#c8283a" stroke-width="1.1"/>
<path d="M5.6 3 V9" stroke="#050a20" stroke-width="1.3"/>
<rect x="6.9" y="7.8" width="1.3" height="1.3" fill="#050a20"/>
<path d="M9.2 4.4 Q9.5 3.2 10.6 3.2 Q11.8 3.2 11.8 4.5 Q11.8 5.5 9.3 8.4 H12.1" stroke="#050a20" stroke-width="1.25" fill="none"/>
</svg><div class="tt" style="left:83px;top:401px">Верхний порог RPM для работы ДК2</div><div class="hdot" style="left:53px;top:425px;width:10px"></div><svg class="ic" style="left:64px;top:417px" width="16" height="16" viewBox="0 0 16 16">
<g stroke="#cfc8f4" stroke-width="1">
<path d="M1 4.5 H16 M1 7.5 H16 M1 13.5 H16 M2.5 2 V15 M8.5 2 V15 M11.5 2 V15 M14.5 2 V15"/></g>
<path d="M0 10.5 H16" stroke="#2a1a5a" stroke-width="1.2"/>
<path d="M5.5 0 V16" stroke="#1d2a50" stroke-width="1.2"/>
<path d="M2 12 Q4 11 5.5 11 Q6.5 13 7.5 13 Q9 11 10 7 L11.5 5 Q12.5 7 13 11 L14 12" fill="none" stroke="#c8301e" stroke-width="1.1"/>
</svg><div class="tt" style="left:83px;top:417px">ДК2: Верхний порог нагрузки по оборотам</div><div class="hdot" style="left:53px;top:441px;width:10px"></div><svg class="ic" style="left:64px;top:433px" width="16" height="16" viewBox="0 0 16 16">
<g stroke="#cfc8f4" stroke-width="1">
<path d="M1 4.5 H16 M1 7.5 H16 M1 13.5 H16 M2.5 2 V15 M8.5 2 V15 M11.5 2 V15 M14.5 2 V15"/></g>
<path d="M0 10.5 H16" stroke="#2a1a5a" stroke-width="1.2"/>
<path d="M5.5 0 V16" stroke="#1d2a50" stroke-width="1.2"/>
<path d="M2 12 Q4 11 5.5 11 Q6.5 13 7.5 13 Q9 11 10 7 L11.5 5 Q12.5 7 13 11 L14 12" fill="none" stroke="#c8301e" stroke-width="1.1"/>
</svg><div class="tt" style="left:83px;top:433px">ДК2: Нижний порог нагрузки по оборотам</div><div class="hdot" style="left:53px;top:457px;width:10px"></div><svg class="ic" style="left:65px;top:452px" width="14" height="11" viewBox="0 0 14 11">
<path d="M3.5 0.5 H13.5 V10.5 H0.5 V3.5 Z" fill="#dcf4fe" stroke="#5aa0d8"/>
<path d="M1 3.5 L3.5 1 V3.5 Z" fill="#9cc8ee"/>
<path d="M0.8 6.5 H4 M0.8 8.5 H4" stroke="#c8283a" stroke-width="1.1"/>
<path d="M5.6 3 V9" stroke="#050a20" stroke-width="1.3"/>
<rect x="6.9" y="7.8" width="1.3" height="1.3" fill="#050a20"/>
<path d="M9.2 4.4 Q9.5 3.2 10.6 3.2 Q11.8 3.2 11.8 4.5 Q11.8 5.5 9.3 8.4 H12.1" stroke="#050a20" stroke-width="1.25" fill="none"/>
</svg><div class="tt" style="left:83px;top:449px">Нижний порог 1 ТОГ для диагностики нагрузки</div><div class="hdot" style="left:53px;top:473px;width:10px"></div><svg class="ic" style="left:65px;top:468px" width="14" height="11" viewBox="0 0 14 11">
<path d="M3.5 0.5 H13.5 V10.5 H0.5 V3.5 Z" fill="#dcf4fe" stroke="#5aa0d8"/>
<path d="M1 3.5 L3.5 1 V3.5 Z" fill="#9cc8ee"/>
<path d="M0.8 6.5 H4 M0.8 8.5 H4" stroke="#c8283a" stroke-width="1.1"/>
<path d="M5.6 3 V9" stroke="#050a20" stroke-width="1.3"/>
<rect x="6.9" y="7.8" width="1.3" height="1.3" fill="#050a20"/>
<path d="M9.2 4.4 Q9.5 3.2 10.6 3.2 Q11.8 3.2 11.8 4.5 Q11.8 5.5 9.3 8.4 H12.1" stroke="#050a20" stroke-width="1.25" fill="none"/>
</svg><div class="tt" style="left:83px;top:465px">Нижний порог 2 ТОГ для диагностики нагрузки</div><div class="hdot" style="left:53px;top:489px;width:10px"></div><svg class="ic" style="left:65px;top:484px" width="14" height="11" viewBox="0 0 14 11">
<path d="M3.5 0.5 H13.5 V10.5 H0.5 V3.5 Z" fill="#dcf4fe" stroke="#5aa0d8"/>
<path d="M1 3.5 L3.5 1 V3.5 Z" fill="#9cc8ee"/>
<path d="M0.8 6.5 H4 M0.8 8.5 H4" stroke="#c8283a" stroke-width="1.1"/>
<path d="M5.6 3 V9" stroke="#050a20" stroke-width="1.3"/>
<rect x="6.9" y="7.8" width="1.3" height="1.3" fill="#050a20"/>
<path d="M9.2 4.4 Q9.5 3.2 10.6 3.2 Q11.8 3.2 11.8 4.5 Q11.8 5.5 9.3 8.4 H12.1" stroke="#050a20" stroke-width="1.25" fill="none"/>
</svg><div class="tt" style="left:83px;top:481px">Верхний порог 1 ТОГ для диагностики нагрузки</div><div class="hdot" style="left:53px;top:505px;width:10px"></div><svg class="ic" style="left:65px;top:500px" width="14" height="11" viewBox="0 0 14 11">
<path d="M3.5 0.5 H13.5 V10.5 H0.5 V3.5 Z" fill="#dcf4fe" stroke="#5aa0d8"/>
<path d="M1 3.5 L3.5 1 V3.5 Z" fill="#9cc8ee"/>
<path d="M0.8 6.5 H4 M0.8 8.5 H4" stroke="#c8283a" stroke-width="1.1"/>
<path d="M5.6 3 V9" stroke="#050a20" stroke-width="1.3"/>
<rect x="6.9" y="7.8" width="1.3" height="1.3" fill="#050a20"/>
<path d="M9.2 4.4 Q9.5 3.2 10.6 3.2 Q11.8 3.2 11.8 4.5 Q11.8 5.5 9.3 8.4 H12.1" stroke="#050a20" stroke-width="1.25" fill="none"/>
</svg><div class="tt" style="left:83px;top:497px">Верхний порог 2 ТОГ для диагностики нагрузки</div><div class="hdot" style="left:37px;top:521px;width:7px"></div><svg class="ic" style="left:44px;top:514px" width="16" height="13" viewBox="0 0 16 13">
<path d="M0.5 11.5 V2 Q0.5 0.5 2 0.5 H5.5 Q6.5 0.5 7 2 L7.5 2.5 H13 Q13.5 2.5 13.5 3 V4.5" fill="#f6e08a" stroke="#bf9c2c"/>
<path d="M1.5 4.5 H14.5 Q15.5 4.5 15.5 5.5 V11.5 Q15.5 12.5 14.5 12.5 H2 Q0.5 12.5 0.5 11.5 V5.5 Q0.5 4.5 1.5 4.5 Z" fill="#fbe98e" stroke="#bf9c2c"/>
<path d="M2 5.5 H14.5" stroke="#fff8c8"/>
<rect x="2" y="6.5" width="12.5" height="5" fill="#f8e27a"/>
</svg></div><div class="abs" style="left:331px;top:144px;width:17px;height:517px;background:#fcfcf8"></div><div class="abs" style="left:332px;top:146px;width:14px;height:15px;background:linear-gradient(135deg,#e0e8fc,#c4d4fa 60%,#b4c8f4);border:1px solid #fff;border-radius:2px;box-shadow:1px 1px 0 #9cb0d8"><svg class="abs" style="left:2px;top:4px" width="9" height="6"><path d="M1 5 L4.5 1.5 L8 5" stroke="#4d6185" stroke-width="2" fill="none"/></svg></div><div class="abs" style="left:332px;top:487px;width:14px;height:150px;background:linear-gradient(135deg,#e0e8fc,#c4d4fa 60%,#b4c8f4);border:1px solid #fff;border-radius:2px;box-shadow:1px 1px 0 #9cb0d8"><div class="abs" style="left:3px;top:71px;width:7px;height:6px;background-image:linear-gradient(#eef2fe 50%,#8ca0d0 50%);background-size:7px 2px"></div></div><div class="abs" style="left:332px;top:644px;width:14px;height:15px;background:linear-gradient(135deg,#e0e8fc,#c4d4fa 60%,#b4c8f4);border:1px solid #fff;border-radius:2px;box-shadow:1px 1px 0 #9cb0d8"><svg class="abs" style="left:2px;top:4px" width="9" height="6"><path d="M1 1 L4.5 4.5 L8 1" stroke="#4d6185" stroke-width="2" fill="none"/></svg></div><div class="abs" style="left:33px;top:661px;width:315px;height:17px;background:#fcfcf8"></div><div class="abs" style="left:34px;top:662px;width:15px;height:14px;background:linear-gradient(135deg,#e0e8fc,#c4d4fa 60%,#b4c8f4);border:1px solid #fff;border-radius:2px;box-shadow:1px 1px 0 #9cb0d8"><svg class="abs" style="left:4px;top:2px" width="6" height="9"><path d="M5 1 L1.5 4.5 L5 8" stroke="#4d6185" stroke-width="2" fill="none"/></svg></div><div class="abs" style="left:51px;top:662px;width:201px;height:14px;background:linear-gradient(135deg,#e0e8fc,#c4d4fa 60%,#b4c8f4);border:1px solid #fff;border-radius:2px;box-shadow:1px 1px 0 #9cb0d8"><div class="abs" style="left:96px;top:3px;width:6px;height:7px;background-image:linear-gradient(90deg,#eef2fe 50%,#8ca0d0 50%);background-size:2px 7px"></div></div><div class="abs" style="left:315px;top:662px;width:15px;height:14px;background:linear-gradient(135deg,#e0e8fc,#c4d4fa 60%,#b4c8f4);border:1px solid #fff;border-radius:2px;box-shadow:1px 1px 0 #9cb0d8"><svg class="abs" style="left:4px;top:2px" width="6" height="9"><path d="M1 1 L4.5 4.5 L1 8" stroke="#4d6185" stroke-width="2" fill="none"/></svg></div><div class="abs" style="left:331px;top:661px;width:17px;height:17px;background:#efebdc"></div><div class="abs" style="left:29px;top:683px;width:325px;height:42px;background:#dde9f5;border-bottom:2px solid #a4a498"></div><div class="abs" style="left:38px;top:697px;font-size:11px;white-space:nowrap">Поиск калибровки</div><div class="abs" style="left:147px;top:693px;width:197px;height:21px;border:1px solid #7f9db9;background:#fff"></div><div class="abs" style="left:355px;top:95px;width:633px;height:629px;background:#fff"></div><div class="abs" style="left:355px;top:115px;width:633px;height:608px;background:#fff;border:1px solid #8a9ab0;border-top-color:#919b9c;border-right-color:#aca899;border-bottom-color:#9c9c90"></div><div class="abs" style="left:988px;top:115px;width:2px;height:608px;background:#e4e2d8"></div><div class="abs" style="left:356px;top:95px;width:53px;height:22px;background:#fff;border:1px solid #919b9c;border-bottom:none;border-top:3px solid #f5b840;border-radius:3px 3px 0 0"></div><div class="abs" style="left:363px;top:99px;font-size:11px">График</div><div class="abs" style="left:409px;top:97px;width:51px;height:19px;background:linear-gradient(#fcfcfe,#ecebe6);border:1px solid #919b9c;border-radius:3px 3px 0 0"></div><div class="abs" style="left:413px;top:100px;font-size:11px">Таблица</div><svg style="position:absolute;left:356px;top:116px" width="630" height="522" viewBox="356 116 630 522"><path d="M428 576.5 H976 M428 550.5 H976 M428 524.5 H976 M428 498.5 H976 M428 472.5 H976 M428 446.5 H976 M428 421.5 H976 M428 395.5 H976 M428 369.5 H976 M428 343.5 H976 M428 317.5 H976 M428 291.5 H976 M428 265.5 H976 M428 240.5 H976 M428 214.5 H976 M428 188.5 H976 M428 162.5 H976" stroke="#6a6a6a" stroke-width="1" stroke-dasharray="1 1" fill="none"/><path d="M505.5 154 V575 M584.5 154 V575 M662.5 154 V575 M741.5 154 V575 M819.5 154 V575 M898.5 154 V575" stroke="#8c8c8c" stroke-width="1" stroke-dasharray="1 1" fill="none"/><rect x="426" y="152" width="2" height="425" fill="#000"/><rect x="426" y="575" width="551" height="2" fill="#000"/><rect x="426" y="152" width="551" height="2" fill="#000"/><rect x="976" y="152" width="1" height="425" fill="#000"/><path d="M423 576.5 H426 M423 550.5 H426 M423 524.5 H426 M423 498.5 H426 M423 472.5 H426 M423 446.5 H426 M423 421.5 H426 M423 395.5 H426 M423 369.5 H426 M423 343.5 H426 M423 317.5 H426 M423 291.5 H426 M423 265.5 H426 M423 240.5 H426 M423 214.5 H426 M423 188.5 H426 M423 162.5 H426 M427.5 577 V580 M505.5 577 V580 M584.5 577 V580 M662.5 577 V580 M741.5 577 V580 M819.5 577 V580 M898.5 577 V580 M976.5 577 V580" stroke="#000" stroke-width="1" fill="none"/><path d="M424 571.5 H426 M424 565.5 H426 M424 560.5 H426 M424 555.5 H426 M424 545.5 H426 M424 539.5 H426 M424 534.5 H426 M424 529.5 H426 M424 519.5 H426 M424 514.5 H426 M424 508.5 H426 M424 503.5 H426 M424 493.5 H426 M424 488.5 H426 M424 483.5 H426 M424 477.5 H426 M424 467.5 H426 M424 462.5 H426 M424 457.5 H426 M424 452.5 H426 M424 441.5 H426 M424 436.5 H426 M424 431.5 H426 M424 426.5 H426 M424 415.5 H426 M424 410.5 H426 M424 405.5 H426 M424 400.5 H426 M424 390.5 H426 M424 384.5 H426 M424 379.5 H426 M424 374.5 H426 M424 364.5 H426 M424 358.5 H426 M424 353.5 H426 M424 348.5 H426 M424 338.5 H426 M424 333.5 H426 M424 327.5 H426 M424 322.5 H426 M424 312.5 H426 M424 307.5 H426 M424 302.5 H426 M424 296.5 H426 M424 286.5 H426 M424 281.5 H426 M424 276.5 H426 M424 271.5 H426 M424 260.5 H426 M424 255.5 H426 M424 250.5 H426 M424 245.5 H426 M424 234.5 H426 M424 229.5 H426 M424 224.5 H426 M424 219.5 H426 M424 208.5 H426 M424 203.5 H426 M424 198.5 H426 M424 193.5 H426 M424 183.5 H426 M424 177.5 H426 M424 172.5 H426 M424 167.5 H426 M443.5 577 V579 M458.5 577 V579 M474.5 577 V579 M490.5 577 V579 M521.5 577 V579 M537.5 577 V579 M552.5 577 V579 M568.5 577 V579 M600.5 577 V579 M615.5 577 V579 M631.5 577 V579 M647.5 577 V579 M678.5 577 V579 M694.5 577 V579 M709.5 577 V579 M725.5 577 V579 M756.5 577 V579 M772.5 577 V579 M788.5 577 V579 M803.5 577 V579 M835.5 577 V579 M851.5 577 V579 M866.5 577 V579 M882.5 577 V579 M913.5 577 V579 M929.5 577 V579 M945.5 577 V579 M960.5 577 V579" stroke="#808080" stroke-width="1" fill="none"/><text x="420" y="580.5" text-anchor="end" font-family="Liberation Sans" font-size="11" fill="#000">0</text><text x="420" y="554.5" text-anchor="end" font-family="Liberation Sans" font-size="11" fill="#000">1 000</text><text x="420" y="528.5" text-anchor="end" font-family="Liberation Sans" font-size="11" fill="#000">2 000</text><text x="420" y="502.5" text-anchor="end" font-family="Liberation Sans" font-size="11" fill="#000">3 000</text><text x="420" y="476.5" text-anchor="end" font-family="Liberation Sans" font-size="11" fill="#000">4 000</text><text x="420" y="450.5" text-anchor="end" font-family="Liberation Sans" font-size="11" fill="#000">5 000</text><text x="420" y="425.5" text-anchor="end" font-family="Liberation Sans" font-size="11" fill="#000">6 000</text><text x="420" y="399.5" text-anchor="end" font-family="Liberation Sans" font-size="11" fill="#000">7 000</text><text x="420" y="373.5" text-anchor="end" font-family="Liberation Sans" font-size="11" fill="#000">8 000</text><text x="420" y="347.5" text-anchor="end" font-family="Liberation Sans" font-size="11" fill="#000">9 000</text><text x="420" y="321.5" text-anchor="end" font-family="Liberation Sans" font-size="11" fill="#000">10 000</text><text x="420" y="295.5" text-anchor="end" font-family="Liberation Sans" font-size="11" fill="#000">11 000</text><text x="420" y="269.5" text-anchor="end" font-family="Liberation Sans" font-size="11" fill="#000">12 000</text><text x="420" y="244.5" text-anchor="end" font-family="Liberation Sans" font-size="11" fill="#000">13 000</text><text x="420" y="218.5" text-anchor="end" font-family="Liberation Sans" font-size="11" fill="#000">14 000</text><text x="420" y="192.5" text-anchor="end" font-family="Liberation Sans" font-size="11" fill="#000">15 000</text><text x="420" y="166.5" text-anchor="end" font-family="Liberation Sans" font-size="11" fill="#000">16 000</text><text transform="translate(431,583) rotate(-90)" text-anchor="end" font-family="Liberation Sans" font-size="11" fill="#000">0</text><text transform="translate(509,583) rotate(-90)" text-anchor="end" font-family="Liberation Sans" font-size="11" fill="#000">1</text><text transform="translate(588,583) rotate(-90)" text-anchor="end" font-family="Liberation Sans" font-size="11" fill="#000">2</text><text transform="translate(666,583) rotate(-90)" text-anchor="end" font-family="Liberation Sans" font-size="11" fill="#000">3</text><text transform="translate(745,583) rotate(-90)" text-anchor="end" font-family="Liberation Sans" font-size="11" fill="#000">4</text><text transform="translate(823,583) rotate(-90)" text-anchor="end" font-family="Liberation Sans" font-size="11" fill="#000">5</text><text transform="translate(902,583) rotate(-90)" text-anchor="end" font-family="Liberation Sans" font-size="11" fill="#000">6</text><text transform="translate(980,583) rotate(-90)" text-anchor="end" font-family="Liberation Sans" font-size="11" fill="#000">7</text><defs><clipPath id="pa"><rect x="428" y="154" width="548" height="421"/></clipPath></defs><g clip-path="url(#pa)"><path d="M427 416.5 H976" stroke="#1f3a8a" stroke-width="1.2" fill="none"/><rect x="423" y="412" width="9" height="9" fill="#1a30d0" stroke="#000" stroke-width="1.2"/><rect x="501" y="412" width="9" height="9" fill="#1a30d0" stroke="#000" stroke-width="1.2"/><rect x="580" y="412" width="9" height="9" fill="#1a30d0" stroke="#000" stroke-width="1.2"/><rect x="658" y="412" width="9" height="9" fill="#1a30d0" stroke="#000" stroke-width="1.2"/><rect x="737" y="412" width="9" height="9" fill="#1a30d0" stroke="#000" stroke-width="1.2"/><rect x="815" y="412" width="9" height="9" fill="#1a30d0" stroke="#000" stroke-width="1.2"/><rect x="894" y="412" width="9" height="9" fill="#1a30d0" stroke="#000" stroke-width="1.2"/><rect x="972" y="412" width="9" height="9" fill="#1a30d0" stroke="#000" stroke-width="1.2"/></g><text x="427.5" y="406.5" text-anchor="middle" font-family="Liberation Sans" font-size="10" fill="#4a0010" textLength="32.5" lengthAdjust="spacingAndGlyphs">6200,00</text><text x="505.5" y="406.5" text-anchor="middle" font-family="Liberation Sans" font-size="10" fill="#4a0010" textLength="32.5" lengthAdjust="spacingAndGlyphs">6200,00</text><text x="584.5" y="406.5" text-anchor="middle" font-family="Liberation Sans" font-size="10" fill="#4a0010" textLength="32.5" lengthAdjust="spacingAndGlyphs">6200,00</text><text x="662.5" y="406.5" text-anchor="middle" font-family="Liberation Sans" font-size="10" fill="#4a0010" textLength="32.5" lengthAdjust="spacingAndGlyphs">6200,00</text><text x="741.5" y="406.5" text-anchor="middle" font-family="Liberation Sans" font-size="10" fill="#4a0010" textLength="32.5" lengthAdjust="spacingAndGlyphs">6200,00</text><text x="819.5" y="406.5" text-anchor="middle" font-family="Liberation Sans" font-size="10" fill="#4a0010" textLength="32.5" lengthAdjust="spacingAndGlyphs">6200,00</text><text x="898.5" y="406.5" text-anchor="middle" font-family="Liberation Sans" font-size="10" fill="#4a0010" textLength="32.5" lengthAdjust="spacingAndGlyphs">6200,00</text><text x="976.5" y="406.5" text-anchor="middle" font-family="Liberation Sans" font-size="10" fill="#4a0010" textLength="32.5" lengthAdjust="spacingAndGlyphs">6200,00</text><text x="672" y="142" text-anchor="middle" font-family="Liberation Sans" font-size="12" fill="#000" stroke="#000" stroke-width="0.35">Обороты откл.топлива (GEAR)</text><text x="701" y="619" text-anchor="middle" font-family="Liberation Sans" font-weight="bold" font-size="12" fill="#000">Номер передачи</text><text transform="translate(382,364) rotate(-90)" text-anchor="middle" font-family="Liberation Sans" font-weight="bold" font-size="12" fill="#000">Обороты, об/мин</text></svg><div class="abs" style="left:359px;top:637px;width:627px;height:84px;background:linear-gradient(#d3e4fb,#b2cdf2 50%,#93b6ea)"></div><div class="abs" style="left:362px;top:640px;width:173px;height:77px;border:1px solid #a4acbc;box-shadow:inset 1px 1px 0 #fff,1px 1px 0 #fff"></div><div class="abs" style="left:538px;top:640px;width:188px;height:77px;border:1px solid #a4acbc;box-shadow:inset 1px 1px 0 #fff,1px 1px 0 #fff"></div><div class="abs" style="left:729px;top:640px;width:183px;height:77px;border:1px solid #a4acbc;box-shadow:inset 1px 1px 0 #fff,1px 1px 0 #fff"></div><div class="abs" style="left:915px;top:640px;width:34px;height:77px;border:1px solid #a4acbc;box-shadow:inset 1px 1px 0 #fff,1px 1px 0 #fff"></div><svg class="abs" style="left:367px;top:648px" width="14" height="14" viewBox="0 0 14 14"><rect x="0.5" y="0.5" width="13" height="13" rx="2" fill="#1e8a28" stroke="#18702a"/><rect x="1" y="1" width="12" height="5" rx="1.5" fill="#3aa844"/><path d="M2.5 7 H10.5 M7 3.5 L10.5 7 L7 10.5" stroke="#f0fff0" stroke-width="2" fill="none"/></svg><div class="abs" style="left:382px;top:649px;font-size:11px;white-space:nowrap">Установить в</div><svg class="abs" style="left:367px;top:670px" width="14" height="14" viewBox="0 0 14 14"><rect x="0.5" y="0.5" width="13" height="13" rx="2" fill="#1e8a28" stroke="#18702a"/><rect x="1" y="1" width="12" height="5" rx="1.5" fill="#3aa844"/><path d="M2.5 7 H10.5 M7 3.5 L10.5 7 L7 10.5" stroke="#f0fff0" stroke-width="2" fill="none"/></svg><div class="abs" style="left:382px;top:671px;font-size:11px;white-space:nowrap">Изменить на</div><div class="abs" style="left:368px;top:694px;width:13px;height:13px;border:1px solid #1c5180;background:linear-gradient(135deg,#dcdcd7,#fff)"></div><div class="abs" style="left:384px;top:694px;font-size:11px">%</div><div class="abs" style="left:396px;top:694px;width:13px;height:13px;border:1px solid #1c5180;background:linear-gradient(135deg,#dcdcd7,#fff)"></div><div class="abs" style="left:414px;top:694px;font-size:11px">относит.</div><div class="abs" style="left:463px;top:645px;width:64px;height:21px;border:1px solid #9cb0d0;background:#fff"></div><div class="abs" style="left:467px;top:648px;font-size:11px">0,000</div><div class="abs" style="left:510px;top:648px;width:13px;height:15px;background:linear-gradient(#d8e2fa,#b6c8f2);border-radius:2px"><svg class="abs" style="left:2px;top:1px" width="9" height="13"><path d="M1.5 5.5 L4.5 2.5 L7.5 5.5 M1.5 8 L4.5 11 L7.5 8" stroke="#4d6185" stroke-width="2" fill="none"/></svg></div><div class="abs" style="left:463px;top:667px;width:64px;height:21px;border:1px solid #9cb0d0;background:#fff"></div><div class="abs" style="left:467px;top:670px;font-size:11px">0,000</div><div class="abs" style="left:510px;top:670px;width:13px;height:15px;background:linear-gradient(#d8e2fa,#b6c8f2);border-radius:2px"><svg class="abs" style="left:2px;top:1px" width="9" height="13"><path d="M1.5 5.5 L4.5 2.5 L7.5 5.5 M1.5 8 L4.5 11 L7.5 8" stroke="#4d6185" stroke-width="2" fill="none"/></svg></div><div class="abs" style="left:463px;top:689px;width:64px;height:21px;border:1px solid #9cb0d0;background:#fff"></div><div class="abs" style="left:467px;top:692px;font-size:11px">0,000</div><div class="abs" style="left:510px;top:692px;width:13px;height:15px;background:linear-gradient(#d8e2fa,#b6c8f2);border-radius:2px"><svg class="abs" style="left:2px;top:1px" width="9" height="13"><path d="M1.5 5.5 L4.5 2.5 L7.5 5.5 M1.5 8 L4.5 11 L7.5 8" stroke="#4d6185" stroke-width="2" fill="none"/></svg></div><div class="abs" style="left:547px;top:657px;width:81px;height:11px;background:#f0efe6;border-top:1px solid #a8a8a0"></div><div class="abs" style="left:547px;top:685px;width:81px;height:11px;background:#f0efe6;border-top:1px solid #a8a8a0"></div><svg class="abs" style="left:546px;top:655px" width="10" height="16" viewBox="0 0 10 16"><path d="M0.5 1.5 Q0.5 0.5 1.5 0.5 H8.5 Q9.5 0.5 9.5 1.5 V11 L5 15.5 L0.5 11 Z" fill="#f4f4ee" stroke="#7a8a7a"/><path d="M1 1 H9" stroke="#3cb43c" stroke-width="2"/><path d="M1 11 L5 15 L9 11" stroke="#4aa84a" fill="none"/></svg><svg class="abs" style="left:578px;top:683px" width="10" height="16" viewBox="0 0 10 16"><path d="M0.5 1.5 Q0.5 0.5 1.5 0.5 H8.5 Q9.5 0.5 9.5 1.5 V11 L5 15.5 L0.5 11 Z" fill="#f4f4ee" stroke="#7a8a7a"/><path d="M1 1 H9" stroke="#3cb43c" stroke-width="2"/><path d="M1 11 L5 15 L9 11" stroke="#4aa84a" fill="none"/></svg><div class="abs" style="left:636px;top:646px;width:83px;height:67px;border:1px solid #1c3a6a;border-radius:3px;background:linear-gradient(#fcfcfa,#ecebe4)"></div><svg class="abs" style="left:0;top:0" width="994" height="748" viewBox="0 0 994 748"><path d="M643.5 651 V708 M650.5 651 V708 M657.5 651 V708 M664.5 651 V708 M671.5 651 V708 M678.5 651 V708 M685.5 651 V708 M692.5 651 V708 M699.5 651 V708 M706.5 651 V708 M713.5 651 V708 M643 651.5 H713 M643 659.5 H713 M643 667.5 H713 M643 675.5 H713 M643 683.5 H713 M643 691.5 H713 M643 699.5 H713 M643 707.5 H713" stroke="#9a928a" stroke-width="1" fill="none"/><path d="M646 655 H661 Q690 660 705 705" stroke="#1a2a9a" stroke-width="1.1" fill="none"/><path d="M646 704 H660 Q695 700 711 656" stroke="#c02a2a" stroke-width="1.1" fill="none"/></svg><div class="abs" style="left:736px;top:650px;width:12px;height:12px;background:#fff;border:1px solid #f0efe6"></div><svg class="abs" style="left:737px;top:652px" width="9" height="9"><path d="M1 4 L3.5 6.5 L8 1.5" stroke="#a0a0a0" stroke-width="1.8" fill="none"/></svg><div class="abs" style="left:736px;top:666px;width:12px;height:12px;background:#fff;border:1px solid #f0efe6"></div><div class="abs" style="left:736px;top:682px;width:12px;height:12px;background:#fff;border:1px solid #f0efe6"></div><div class="abs" style="left:736px;top:698px;width:12px;height:12px;background:#e6e4d8;opacity:.8"></div><div class="abs" style="left:754px;top:650px;font-size:11px;white-space:nowrap">2D - отображать все точки</div><div class="abs" style="left:754px;top:666px;font-size:11px;white-space:nowrap">3D - следить за мышью</div><div class="abs" style="left:754px;top:682px;font-size:11px;white-space:nowrap">3D - изм. соседние точки</div><div class="abs" style="left:754px;top:698px;font-size:11px;white-space:nowrap;color:#f4f8ff;text-shadow:1px 1px 0 #a8bce0">2D - отменить ZOOM</div><svg class="abs" style="left:0;top:0" width="994" height="748"><rect x="889" y="683" width="16" height="13" fill="#fff"/><path d="M889.5 683 V697 M893.5 683 V697 M897.5 683 V697 M901.5 683 V697 M905.5 683 V697 M889 683.5 H906 M889 687.8 H906 M889 692.2 H906 M889 696.5 H906" stroke="#1a4aa8" stroke-width="1.3" fill="none"/></svg><div class="abs" style="left:922px;top:654px;width:20px;height:20px;border-radius:2px;background:#efeee6;border:1px solid #d6d4c8"></div><div class="abs" style="left:928px;top:657px;font-size:12px;color:#a4a4a0">X</div><div class="abs" style="left:922px;top:686px;width:20px;height:20px;border-radius:2px;background:#efeee6;border:1px solid #d6d4c8"></div><div class="abs" style="left:928px;top:689px;font-size:12px;color:#a4a4a0">Z</div><div class="abs" style="left:355px;top:723px;width:635px;height:2px;background:#e8e4d0"></div><div class="abs" style="left:356px;top:721px;width:631px;height:1px;background:#fff"></div><div class="abs" style="left:4px;top:725px;width:986px;height:19px;background:linear-gradient(#bcd4fa,#9cbcee 45%,#84a8e4 88%,#a8c0ea)"></div><div class="abs" style="left:161px;top:727px;width:1px;height:15px;background:#98b0dc"></div><div class="abs" style="left:162px;top:727px;width:1px;height:15px;background:#e8f0fc"></div><div class="abs" style="left:309px;top:727px;width:1px;height:15px;background:#98b0dc"></div><div class="abs" style="left:310px;top:727px;width:1px;height:15px;background:#e8f0fc"></div><div class="abs" style="left:359px;top:727px;width:1px;height:15px;background:#98b0dc"></div><div class="abs" style="left:360px;top:727px;width:1px;height:15px;background:#e8f0fc"></div><div class="abs" style="left:10px;top:729px;font-size:11px;white-space:nowrap;color:#0a1030">Bosch ME7.9.9</div><div class="abs" style="left:165px;top:729px;font-size:11px;white-space:nowrap;color:#0a1030">неизв. ПО</div><div class="abs" style="left:312px;top:727px;width:45px;height:15px;background:linear-gradient(#b0f4b0,#28e028 30%,#18dc18 60%,#c8f8c8)"></div><div class="abs" style="left:321px;top:729px;font-size:11px">100%</div><div class="abs" style="left:984px;top:732px;width:2px;height:2px;background:#e4eeff"></div><div class="abs" style="left:983px;top:731px;width:2px;height:2px;background:#a8bee4"></div><div class="abs" style="left:980px;top:736px;width:2px;height:2px;background:#e4eeff"></div><div class="abs" style="left:979px;top:735px;width:2px;height:2px;background:#a8bee4"></div><div class="abs" style="left:984px;top:736px;width:2px;height:2px;background:#e4eeff"></div><div class="abs" style="left:983px;top:735px;width:2px;height:2px;background:#a8bee4"></div><div class="abs" style="left:976px;top:740px;width:2px;height:2px;background:#e4eeff"></div><div class="abs" style="left:975px;top:739px;width:2px;height:2px;background:#a8bee4"></div><div class="abs" style="left:980px;top:740px;width:2px;height:2px;background:#e4eeff"></div><div class="abs" style="left:979px;top:739px;width:2px;height:2px;background:#a8bee4"></div><div class="abs" style="left:984px;top:740px;width:2px;height:2px;background:#e4eeff"></div><div class="abs" style="left:983px;top:739px;width:2px;height:2px;background:#a8bee4"></div></body></html>
